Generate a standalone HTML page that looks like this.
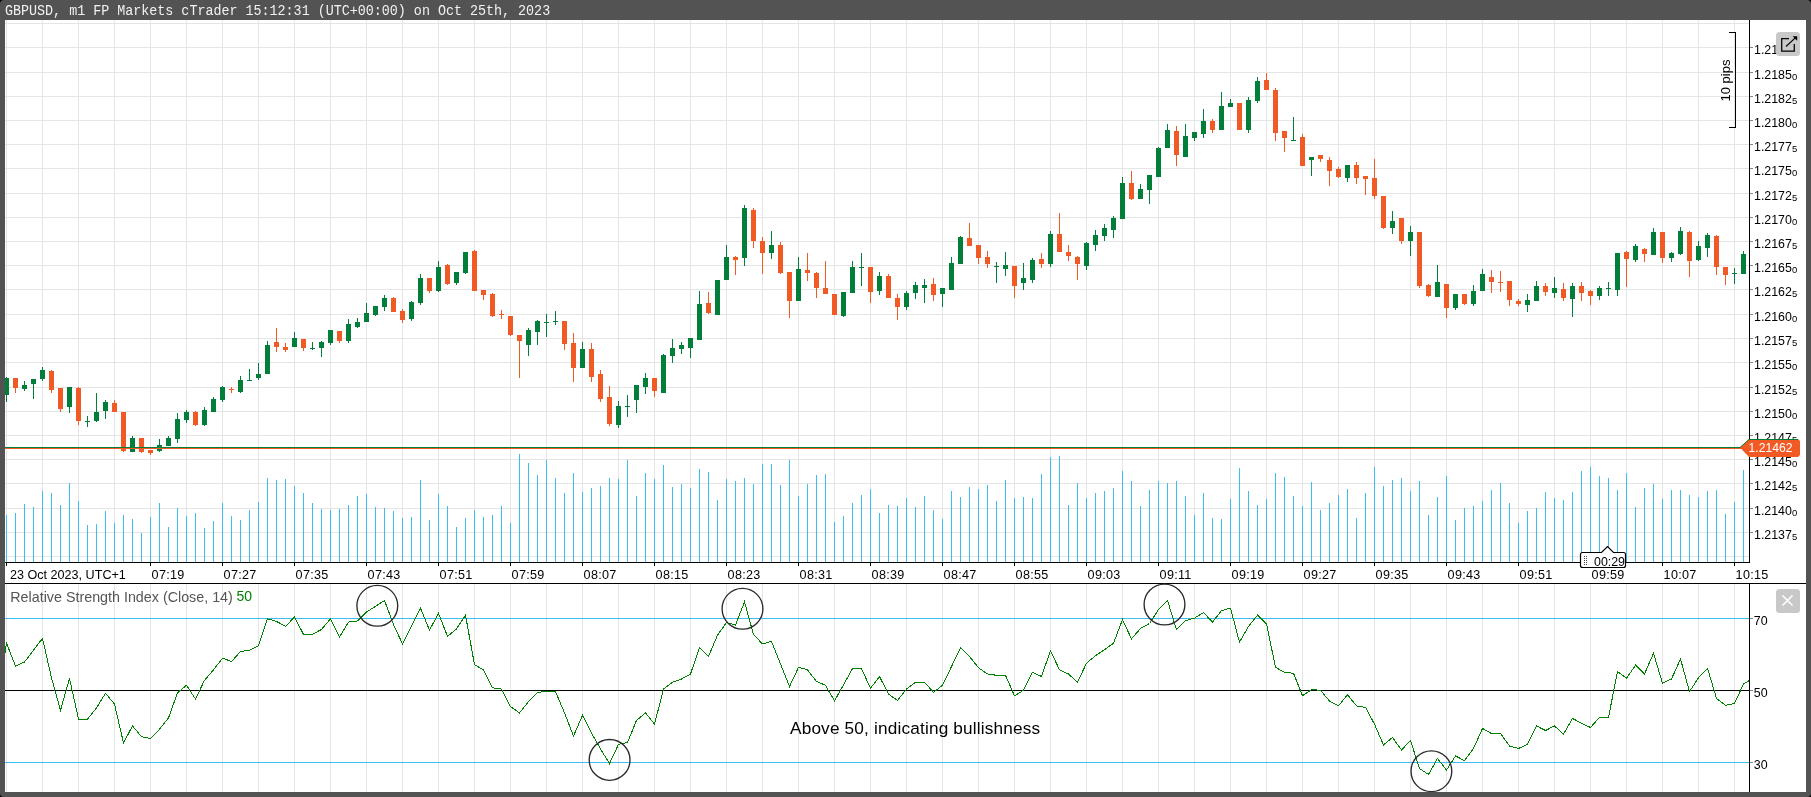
<!DOCTYPE html>
<html><head><meta charset="utf-8"><title>GBPUSD chart</title>
<style>
html,body{margin:0;padding:0;background:#000;width:1811px;height:797px;overflow:hidden}
#frame{position:absolute;left:0;top:0;width:1811px;height:797px;background:#535353;border-radius:4px}
#title{will-change:transform;transform:scaleY(1.11);transform-origin:0 4px;position:absolute;left:4.7px;top:1px;height:19px;line-height:19px;font-family:"Liberation Mono",monospace;font-size:13.37px;color:#f2f2f2;white-space:pre}
</style></head><body>
<div id="frame"></div>
<div id="title">GBPUSD, m1 FP Markets cTrader 15:12:31 (UTC+00:00) on Oct 25th, 2023</div>
<svg width="1811" height="797" viewBox="0 0 1811 797" style="position:absolute;left:0;top:0;will-change:transform">
<defs><clipPath id="plot"><rect x="5" y="20" width="1744" height="542"/></clipPath><clipPath id="rsiclip"><rect x="5" y="584" width="1744" height="208"/></clipPath></defs>
<rect x="5" y="20" width="1801" height="563" fill="#fff"/>
<rect x="5" y="583" width="1801" height="1" fill="#000"/>
<rect x="5" y="584" width="1801" height="208" fill="#fff"/>
<g fill="#e5e5e5" shape-rendering="crispEdges"><rect x="6" y="20" width="1" height="542"/><rect x="6" y="584" width="1" height="208"/><rect x="42" y="20" width="1" height="542"/><rect x="42" y="584" width="1" height="208"/><rect x="78" y="20" width="1" height="542"/><rect x="78" y="584" width="1" height="208"/><rect x="114" y="20" width="1" height="542"/><rect x="114" y="584" width="1" height="208"/><rect x="150" y="20" width="1" height="542"/><rect x="150" y="584" width="1" height="208"/><rect x="186" y="20" width="1" height="542"/><rect x="186" y="584" width="1" height="208"/><rect x="222" y="20" width="1" height="542"/><rect x="222" y="584" width="1" height="208"/><rect x="258" y="20" width="1" height="542"/><rect x="258" y="584" width="1" height="208"/><rect x="294" y="20" width="1" height="542"/><rect x="294" y="584" width="1" height="208"/><rect x="330" y="20" width="1" height="542"/><rect x="330" y="584" width="1" height="208"/><rect x="366" y="20" width="1" height="542"/><rect x="366" y="584" width="1" height="208"/><rect x="402" y="20" width="1" height="542"/><rect x="402" y="584" width="1" height="208"/><rect x="438" y="20" width="1" height="542"/><rect x="438" y="584" width="1" height="208"/><rect x="474" y="20" width="1" height="542"/><rect x="474" y="584" width="1" height="208"/><rect x="510" y="20" width="1" height="542"/><rect x="510" y="584" width="1" height="208"/><rect x="546" y="20" width="1" height="542"/><rect x="546" y="584" width="1" height="208"/><rect x="582" y="20" width="1" height="542"/><rect x="582" y="584" width="1" height="208"/><rect x="618" y="20" width="1" height="542"/><rect x="618" y="584" width="1" height="208"/><rect x="654" y="20" width="1" height="542"/><rect x="654" y="584" width="1" height="208"/><rect x="690" y="20" width="1" height="542"/><rect x="690" y="584" width="1" height="208"/><rect x="726" y="20" width="1" height="542"/><rect x="726" y="584" width="1" height="208"/><rect x="762" y="20" width="1" height="542"/><rect x="762" y="584" width="1" height="208"/><rect x="798" y="20" width="1" height="542"/><rect x="798" y="584" width="1" height="208"/><rect x="834" y="20" width="1" height="542"/><rect x="834" y="584" width="1" height="208"/><rect x="870" y="20" width="1" height="542"/><rect x="870" y="584" width="1" height="208"/><rect x="906" y="20" width="1" height="542"/><rect x="906" y="584" width="1" height="208"/><rect x="942" y="20" width="1" height="542"/><rect x="942" y="584" width="1" height="208"/><rect x="978" y="20" width="1" height="542"/><rect x="978" y="584" width="1" height="208"/><rect x="1014" y="20" width="1" height="542"/><rect x="1014" y="584" width="1" height="208"/><rect x="1050" y="20" width="1" height="542"/><rect x="1050" y="584" width="1" height="208"/><rect x="1086" y="20" width="1" height="542"/><rect x="1086" y="584" width="1" height="208"/><rect x="1122" y="20" width="1" height="542"/><rect x="1122" y="584" width="1" height="208"/><rect x="1158" y="20" width="1" height="542"/><rect x="1158" y="584" width="1" height="208"/><rect x="1194" y="20" width="1" height="542"/><rect x="1194" y="584" width="1" height="208"/><rect x="1230" y="20" width="1" height="542"/><rect x="1230" y="584" width="1" height="208"/><rect x="1266" y="20" width="1" height="542"/><rect x="1266" y="584" width="1" height="208"/><rect x="1302" y="20" width="1" height="542"/><rect x="1302" y="584" width="1" height="208"/><rect x="1338" y="20" width="1" height="542"/><rect x="1338" y="584" width="1" height="208"/><rect x="1374" y="20" width="1" height="542"/><rect x="1374" y="584" width="1" height="208"/><rect x="1410" y="20" width="1" height="542"/><rect x="1410" y="584" width="1" height="208"/><rect x="1446" y="20" width="1" height="542"/><rect x="1446" y="584" width="1" height="208"/><rect x="1482" y="20" width="1" height="542"/><rect x="1482" y="584" width="1" height="208"/><rect x="1518" y="20" width="1" height="542"/><rect x="1518" y="584" width="1" height="208"/><rect x="1554" y="20" width="1" height="542"/><rect x="1554" y="584" width="1" height="208"/><rect x="1590" y="20" width="1" height="542"/><rect x="1590" y="584" width="1" height="208"/><rect x="1626" y="20" width="1" height="542"/><rect x="1626" y="584" width="1" height="208"/><rect x="1662" y="20" width="1" height="542"/><rect x="1662" y="584" width="1" height="208"/><rect x="1698" y="20" width="1" height="542"/><rect x="1698" y="584" width="1" height="208"/><rect x="1734" y="20" width="1" height="542"/><rect x="1734" y="584" width="1" height="208"/><rect x="5" y="23" width="1744" height="1"/><rect x="5" y="47" width="1744" height="1"/><rect x="5" y="72" width="1744" height="1"/><rect x="5" y="96" width="1744" height="1"/><rect x="5" y="120" width="1744" height="1"/><rect x="5" y="144" width="1744" height="1"/><rect x="5" y="168" width="1744" height="1"/><rect x="5" y="193" width="1744" height="1"/><rect x="5" y="217" width="1744" height="1"/><rect x="5" y="241" width="1744" height="1"/><rect x="5" y="265" width="1744" height="1"/><rect x="5" y="289" width="1744" height="1"/><rect x="5" y="314" width="1744" height="1"/><rect x="5" y="338" width="1744" height="1"/><rect x="5" y="362" width="1744" height="1"/><rect x="5" y="387" width="1744" height="1"/><rect x="5" y="411" width="1744" height="1"/><rect x="5" y="435" width="1744" height="1"/><rect x="5" y="459" width="1744" height="1"/><rect x="5" y="483" width="1744" height="1"/><rect x="5" y="508" width="1744" height="1"/><rect x="5" y="532" width="1744" height="1"/><rect x="5" y="556" width="1744" height="1"/></g>
<g fill="#3dbdf0" shape-rendering="crispEdges"><rect x="6" y="515" width="1" height="47"/><rect x="15" y="513" width="1" height="49"/><rect x="24" y="504" width="1" height="58"/><rect x="33" y="507" width="1" height="55"/><rect x="42" y="491" width="1" height="71"/><rect x="51" y="493" width="1" height="69"/><rect x="60" y="505" width="1" height="57"/><rect x="69" y="483" width="1" height="79"/><rect x="78" y="501" width="1" height="61"/><rect x="87" y="525" width="1" height="37"/><rect x="96" y="524" width="1" height="38"/><rect x="105" y="511" width="1" height="51"/><rect x="114" y="523" width="1" height="39"/><rect x="123" y="515" width="1" height="47"/><rect x="132" y="519" width="1" height="43"/><rect x="141" y="533" width="1" height="29"/><rect x="150" y="517" width="1" height="45"/><rect x="159" y="503" width="1" height="59"/><rect x="168" y="527" width="1" height="35"/><rect x="177" y="508" width="1" height="54"/><rect x="186" y="516" width="1" height="46"/><rect x="195" y="513" width="1" height="49"/><rect x="204" y="528" width="1" height="34"/><rect x="213" y="521" width="1" height="41"/><rect x="222" y="503" width="1" height="59"/><rect x="231" y="516" width="1" height="46"/><rect x="240" y="520" width="1" height="42"/><rect x="249" y="510" width="1" height="52"/><rect x="258" y="502" width="1" height="60"/><rect x="267" y="478" width="1" height="84"/><rect x="276" y="480" width="1" height="82"/><rect x="285" y="479" width="1" height="83"/><rect x="294" y="486" width="1" height="76"/><rect x="303" y="493" width="1" height="69"/><rect x="312" y="503" width="1" height="59"/><rect x="321" y="509" width="1" height="53"/><rect x="330" y="510" width="1" height="52"/><rect x="339" y="509" width="1" height="53"/><rect x="348" y="505" width="1" height="57"/><rect x="357" y="496" width="1" height="66"/><rect x="366" y="494" width="1" height="68"/><rect x="375" y="507" width="1" height="55"/><rect x="384" y="508" width="1" height="54"/><rect x="393" y="511" width="1" height="51"/><rect x="402" y="518" width="1" height="44"/><rect x="411" y="517" width="1" height="45"/><rect x="420" y="480" width="1" height="82"/><rect x="429" y="520" width="1" height="42"/><rect x="438" y="494" width="1" height="68"/><rect x="447" y="506" width="1" height="56"/><rect x="456" y="527" width="1" height="35"/><rect x="465" y="518" width="1" height="44"/><rect x="474" y="510" width="1" height="52"/><rect x="483" y="517" width="1" height="45"/><rect x="492" y="515" width="1" height="47"/><rect x="501" y="506" width="1" height="56"/><rect x="510" y="523" width="1" height="39"/><rect x="519" y="454" width="1" height="108"/><rect x="528" y="463" width="1" height="99"/><rect x="537" y="475" width="1" height="87"/><rect x="546" y="460" width="1" height="102"/><rect x="555" y="478" width="1" height="84"/><rect x="564" y="493" width="1" height="69"/><rect x="573" y="473" width="1" height="89"/><rect x="582" y="492" width="1" height="70"/><rect x="591" y="488" width="1" height="74"/><rect x="600" y="486" width="1" height="76"/><rect x="609" y="478" width="1" height="84"/><rect x="618" y="479" width="1" height="83"/><rect x="627" y="460" width="1" height="102"/><rect x="636" y="496" width="1" height="66"/><rect x="645" y="473" width="1" height="89"/><rect x="654" y="479" width="1" height="83"/><rect x="663" y="465" width="1" height="97"/><rect x="672" y="487" width="1" height="75"/><rect x="681" y="484" width="1" height="78"/><rect x="690" y="488" width="1" height="74"/><rect x="699" y="469" width="1" height="93"/><rect x="708" y="472" width="1" height="90"/><rect x="717" y="500" width="1" height="62"/><rect x="726" y="479" width="1" height="83"/><rect x="735" y="481" width="1" height="81"/><rect x="744" y="478" width="1" height="84"/><rect x="753" y="484" width="1" height="78"/><rect x="762" y="464" width="1" height="98"/><rect x="771" y="464" width="1" height="98"/><rect x="780" y="485" width="1" height="77"/><rect x="789" y="460" width="1" height="102"/><rect x="798" y="496" width="1" height="66"/><rect x="807" y="484" width="1" height="78"/><rect x="816" y="475" width="1" height="87"/><rect x="825" y="474" width="1" height="88"/><rect x="834" y="522" width="1" height="40"/><rect x="843" y="516" width="1" height="46"/><rect x="852" y="503" width="1" height="59"/><rect x="861" y="495" width="1" height="67"/><rect x="870" y="489" width="1" height="73"/><rect x="879" y="513" width="1" height="49"/><rect x="888" y="505" width="1" height="57"/><rect x="897" y="506" width="1" height="56"/><rect x="906" y="498" width="1" height="64"/><rect x="915" y="507" width="1" height="55"/><rect x="924" y="496" width="1" height="66"/><rect x="933" y="510" width="1" height="52"/><rect x="942" y="519" width="1" height="43"/><rect x="951" y="491" width="1" height="71"/><rect x="960" y="497" width="1" height="65"/><rect x="969" y="487" width="1" height="75"/><rect x="978" y="489" width="1" height="73"/><rect x="987" y="485" width="1" height="77"/><rect x="996" y="501" width="1" height="61"/><rect x="1005" y="480" width="1" height="82"/><rect x="1014" y="498" width="1" height="64"/><rect x="1023" y="497" width="1" height="65"/><rect x="1032" y="498" width="1" height="64"/><rect x="1041" y="474" width="1" height="88"/><rect x="1050" y="457" width="1" height="105"/><rect x="1059" y="456" width="1" height="106"/><rect x="1068" y="505" width="1" height="57"/><rect x="1077" y="483" width="1" height="79"/><rect x="1086" y="498" width="1" height="64"/><rect x="1095" y="493" width="1" height="69"/><rect x="1104" y="491" width="1" height="71"/><rect x="1113" y="488" width="1" height="74"/><rect x="1122" y="471" width="1" height="91"/><rect x="1131" y="481" width="1" height="81"/><rect x="1140" y="506" width="1" height="56"/><rect x="1149" y="490" width="1" height="72"/><rect x="1158" y="481" width="1" height="81"/><rect x="1167" y="483" width="1" height="79"/><rect x="1176" y="481" width="1" height="81"/><rect x="1185" y="496" width="1" height="66"/><rect x="1194" y="515" width="1" height="47"/><rect x="1203" y="493" width="1" height="69"/><rect x="1212" y="518" width="1" height="44"/><rect x="1221" y="519" width="1" height="43"/><rect x="1230" y="499" width="1" height="63"/><rect x="1239" y="468" width="1" height="94"/><rect x="1248" y="491" width="1" height="71"/><rect x="1257" y="505" width="1" height="57"/><rect x="1266" y="499" width="1" height="63"/><rect x="1275" y="473" width="1" height="89"/><rect x="1284" y="477" width="1" height="85"/><rect x="1293" y="496" width="1" height="66"/><rect x="1302" y="506" width="1" height="56"/><rect x="1311" y="482" width="1" height="80"/><rect x="1320" y="510" width="1" height="52"/><rect x="1329" y="503" width="1" height="59"/><rect x="1338" y="495" width="1" height="67"/><rect x="1347" y="489" width="1" height="73"/><rect x="1356" y="518" width="1" height="44"/><rect x="1365" y="493" width="1" height="69"/><rect x="1374" y="467" width="1" height="95"/><rect x="1383" y="486" width="1" height="76"/><rect x="1392" y="480" width="1" height="82"/><rect x="1401" y="478" width="1" height="84"/><rect x="1410" y="491" width="1" height="71"/><rect x="1419" y="481" width="1" height="81"/><rect x="1428" y="515" width="1" height="47"/><rect x="1437" y="497" width="1" height="65"/><rect x="1446" y="476" width="1" height="86"/><rect x="1455" y="520" width="1" height="42"/><rect x="1464" y="508" width="1" height="54"/><rect x="1473" y="506" width="1" height="56"/><rect x="1482" y="501" width="1" height="61"/><rect x="1491" y="490" width="1" height="72"/><rect x="1500" y="483" width="1" height="79"/><rect x="1509" y="503" width="1" height="59"/><rect x="1518" y="523" width="1" height="39"/><rect x="1527" y="511" width="1" height="51"/><rect x="1536" y="508" width="1" height="54"/><rect x="1545" y="492" width="1" height="70"/><rect x="1554" y="498" width="1" height="64"/><rect x="1563" y="500" width="1" height="62"/><rect x="1572" y="492" width="1" height="70"/><rect x="1581" y="471" width="1" height="91"/><rect x="1590" y="467" width="1" height="95"/><rect x="1599" y="476" width="1" height="86"/><rect x="1608" y="478" width="1" height="84"/><rect x="1617" y="490" width="1" height="72"/><rect x="1626" y="473" width="1" height="89"/><rect x="1635" y="507" width="1" height="55"/><rect x="1644" y="488" width="1" height="74"/><rect x="1653" y="484" width="1" height="78"/><rect x="1662" y="499" width="1" height="63"/><rect x="1671" y="490" width="1" height="72"/><rect x="1680" y="490" width="1" height="72"/><rect x="1689" y="495" width="1" height="67"/><rect x="1698" y="497" width="1" height="65"/><rect x="1707" y="491" width="1" height="71"/><rect x="1716" y="490" width="1" height="72"/><rect x="1725" y="514" width="1" height="48"/><rect x="1734" y="502" width="1" height="60"/><rect x="1743" y="470" width="1" height="92"/></g>
<g clip-path="url(#plot)" shape-rendering="crispEdges"><g fill="#007e3a"><rect x="6" y="377" width="1" height="1"/><rect x="4" y="378" width="5" height="17"/><rect x="6" y="395" width="1" height="7"/></g><g fill="#f15a24"><rect x="13" y="378" width="5" height="10"/><rect x="15" y="388" width="1" height="5"/></g><g fill="#007e3a"><rect x="24" y="381" width="1" height="4"/><rect x="22" y="385" width="5" height="4"/><rect x="24" y="389" width="1" height="2"/></g><g fill="#007e3a"><rect x="31" y="379" width="5" height="5"/><rect x="33" y="384" width="1" height="15"/></g><g fill="#007e3a"><rect x="42" y="367" width="1" height="3"/><rect x="40" y="370" width="5" height="9"/><rect x="42" y="379" width="1" height="2"/></g><g fill="#f15a24"><rect x="51" y="370" width="1" height="1"/><rect x="49" y="371" width="5" height="19"/><rect x="51" y="390" width="1" height="3"/></g><g fill="#f15a24"><rect x="58" y="388" width="5" height="21"/><rect x="60" y="409" width="1" height="3"/></g><g fill="#007e3a"><rect x="67" y="387" width="5" height="20"/><rect x="69" y="407" width="1" height="6"/></g><g fill="#f15a24"><rect x="78" y="387" width="1" height="1"/><rect x="76" y="388" width="5" height="33"/><rect x="78" y="421" width="1" height="4"/></g><g fill="#007e3a"><rect x="87" y="416" width="1" height="5"/><rect x="85" y="421" width="5" height="1"/><rect x="87" y="422" width="1" height="5"/></g><g fill="#007e3a"><rect x="96" y="393" width="1" height="19"/><rect x="94" y="412" width="5" height="9"/><rect x="96" y="421" width="1" height="1"/></g><g fill="#007e3a"><rect x="105" y="400" width="1" height="2"/><rect x="103" y="402" width="5" height="9"/><rect x="105" y="411" width="1" height="8"/></g><g fill="#f15a24"><rect x="114" y="400" width="1" height="3"/><rect x="112" y="403" width="5" height="9"/></g><g fill="#f15a24"><rect x="121" y="412" width="5" height="39"/><rect x="123" y="451" width="1" height="1"/></g><g fill="#007e3a"><rect x="132" y="436" width="1" height="2"/><rect x="130" y="438" width="5" height="14"/></g><g fill="#f15a24"><rect x="139" y="438" width="5" height="14"/><rect x="141" y="452" width="1" height="1"/></g><g fill="#f15a24"><rect x="148" y="450" width="5" height="3"/><rect x="150" y="453" width="1" height="2"/></g><g fill="#007e3a"><rect x="159" y="439" width="1" height="6"/><rect x="157" y="445" width="5" height="6"/><rect x="159" y="451" width="1" height="1"/></g><g fill="#007e3a"><rect x="168" y="436" width="1" height="2"/><rect x="166" y="438" width="5" height="8"/></g><g fill="#007e3a"><rect x="177" y="413" width="1" height="6"/><rect x="175" y="419" width="5" height="20"/><rect x="177" y="439" width="1" height="4"/></g><g fill="#007e3a"><rect x="186" y="410" width="1" height="2"/><rect x="184" y="412" width="5" height="8"/><rect x="186" y="420" width="1" height="3"/></g><g fill="#f15a24"><rect x="195" y="411" width="1" height="1"/><rect x="193" y="412" width="5" height="13"/><rect x="195" y="425" width="1" height="1"/></g><g fill="#007e3a"><rect x="204" y="407" width="1" height="3"/><rect x="202" y="410" width="5" height="15"/><rect x="204" y="425" width="1" height="1"/></g><g fill="#007e3a"><rect x="213" y="397" width="1" height="2"/><rect x="211" y="399" width="5" height="13"/></g><g fill="#007e3a"><rect x="222" y="386" width="1" height="1"/><rect x="220" y="387" width="5" height="13"/><rect x="222" y="400" width="1" height="2"/></g><g fill="#f15a24"><rect x="231" y="387" width="1" height="2"/><rect x="229" y="389" width="5" height="1"/><rect x="231" y="390" width="1" height="3"/></g><g fill="#007e3a"><rect x="240" y="376" width="1" height="4"/><rect x="238" y="380" width="5" height="12"/><rect x="240" y="392" width="1" height="1"/></g><g fill="#007e3a"><rect x="249" y="369" width="1" height="11"/><rect x="247" y="380" width="5" height="1"/></g><g fill="#007e3a"><rect x="258" y="363" width="1" height="11"/><rect x="256" y="374" width="5" height="4"/><rect x="258" y="378" width="1" height="2"/></g><g fill="#007e3a"><rect x="267" y="341" width="1" height="4"/><rect x="265" y="345" width="5" height="29"/></g><g fill="#f15a24"><rect x="276" y="328" width="1" height="14"/><rect x="274" y="342" width="5" height="5"/><rect x="276" y="347" width="1" height="5"/></g><g fill="#f15a24"><rect x="285" y="343" width="1" height="4"/><rect x="283" y="347" width="5" height="3"/><rect x="285" y="350" width="1" height="2"/></g><g fill="#007e3a"><rect x="294" y="332" width="1" height="6"/><rect x="292" y="338" width="5" height="9"/></g><g fill="#f15a24"><rect x="301" y="339" width="5" height="9"/><rect x="303" y="348" width="1" height="3"/></g><g fill="#007e3a"><rect x="312" y="342" width="1" height="6"/><rect x="310" y="348" width="5" height="1"/><rect x="312" y="349" width="1" height="1"/></g><g fill="#007e3a"><rect x="321" y="341" width="1" height="1"/><rect x="319" y="342" width="5" height="6"/><rect x="321" y="348" width="1" height="9"/></g><g fill="#007e3a"><rect x="328" y="330" width="5" height="13"/><rect x="330" y="343" width="1" height="2"/></g><g fill="#f15a24"><rect x="337" y="331" width="5" height="10"/><rect x="339" y="341" width="1" height="2"/></g><g fill="#007e3a"><rect x="348" y="319" width="1" height="5"/><rect x="346" y="324" width="5" height="17"/><rect x="348" y="341" width="1" height="2"/></g><g fill="#007e3a"><rect x="357" y="318" width="1" height="4"/><rect x="355" y="322" width="5" height="5"/><rect x="357" y="327" width="1" height="1"/></g><g fill="#007e3a"><rect x="366" y="303" width="1" height="10"/><rect x="364" y="313" width="5" height="9"/></g><g fill="#007e3a"><rect x="373" y="306" width="5" height="9"/><rect x="375" y="315" width="1" height="1"/></g><g fill="#007e3a"><rect x="384" y="295" width="1" height="3"/><rect x="382" y="298" width="5" height="9"/><rect x="384" y="307" width="1" height="4"/></g><g fill="#f15a24"><rect x="393" y="297" width="1" height="1"/><rect x="391" y="298" width="5" height="14"/></g><g fill="#f15a24"><rect x="402" y="309" width="1" height="2"/><rect x="400" y="311" width="5" height="9"/><rect x="402" y="320" width="1" height="3"/></g><g fill="#007e3a"><rect x="411" y="301" width="1" height="1"/><rect x="409" y="302" width="5" height="17"/><rect x="411" y="319" width="1" height="2"/></g><g fill="#007e3a"><rect x="420" y="274" width="1" height="4"/><rect x="418" y="278" width="5" height="25"/><rect x="420" y="303" width="1" height="2"/></g><g fill="#f15a24"><rect x="427" y="278" width="5" height="13"/><rect x="429" y="291" width="1" height="2"/></g><g fill="#007e3a"><rect x="438" y="261" width="1" height="6"/><rect x="436" y="267" width="5" height="24"/><rect x="438" y="291" width="1" height="1"/></g><g fill="#f15a24"><rect x="447" y="264" width="1" height="1"/><rect x="445" y="265" width="5" height="19"/><rect x="447" y="284" width="1" height="1"/></g><g fill="#007e3a"><rect x="454" y="272" width="5" height="11"/><rect x="456" y="283" width="1" height="2"/></g><g fill="#007e3a"><rect x="463" y="252" width="5" height="21"/><rect x="465" y="273" width="1" height="1"/></g><g fill="#f15a24"><rect x="474" y="250" width="1" height="1"/><rect x="472" y="251" width="5" height="40"/></g><g fill="#f15a24"><rect x="481" y="290" width="5" height="5"/><rect x="483" y="295" width="1" height="5"/></g><g fill="#f15a24"><rect x="492" y="293" width="1" height="1"/><rect x="490" y="294" width="5" height="22"/><rect x="492" y="316" width="1" height="1"/></g><g fill="#f15a24"><rect x="501" y="310" width="1" height="4"/><rect x="499" y="314" width="5" height="1"/><rect x="501" y="315" width="1" height="4"/></g><g fill="#f15a24"><rect x="508" y="316" width="5" height="19"/><rect x="510" y="335" width="1" height="1"/></g><g fill="#f15a24"><rect x="517" y="335" width="5" height="6"/><rect x="519" y="341" width="1" height="37"/></g><g fill="#007e3a"><rect x="528" y="328" width="1" height="2"/><rect x="526" y="330" width="5" height="15"/><rect x="528" y="345" width="1" height="11"/></g><g fill="#007e3a"><rect x="537" y="320" width="1" height="1"/><rect x="535" y="321" width="5" height="11"/><rect x="537" y="332" width="1" height="13"/></g><g fill="#007e3a"><rect x="546" y="314" width="1" height="8"/><rect x="544" y="322" width="5" height="1"/><rect x="546" y="323" width="1" height="14"/></g><g fill="#007e3a"><rect x="555" y="311" width="1" height="10"/><rect x="553" y="321" width="5" height="1"/><rect x="555" y="322" width="1" height="3"/></g><g fill="#f15a24"><rect x="562" y="321" width="5" height="23"/><rect x="564" y="344" width="1" height="6"/></g><g fill="#f15a24"><rect x="573" y="333" width="1" height="10"/><rect x="571" y="343" width="5" height="25"/><rect x="573" y="368" width="1" height="14"/></g><g fill="#007e3a"><rect x="582" y="342" width="1" height="7"/><rect x="580" y="349" width="5" height="19"/></g><g fill="#f15a24"><rect x="591" y="343" width="1" height="6"/><rect x="589" y="349" width="5" height="28"/><rect x="591" y="377" width="1" height="5"/></g><g fill="#f15a24"><rect x="600" y="370" width="1" height="4"/><rect x="598" y="374" width="5" height="25"/><rect x="600" y="399" width="1" height="3"/></g><g fill="#f15a24"><rect x="609" y="386" width="1" height="11"/><rect x="607" y="397" width="5" height="27"/><rect x="609" y="424" width="1" height="2"/></g><g fill="#007e3a"><rect x="618" y="401" width="1" height="5"/><rect x="616" y="406" width="5" height="19"/><rect x="618" y="425" width="1" height="3"/></g><g fill="#007e3a"><rect x="627" y="395" width="1" height="11"/><rect x="625" y="406" width="5" height="1"/><rect x="627" y="407" width="1" height="10"/></g><g fill="#007e3a"><rect x="634" y="385" width="5" height="15"/><rect x="636" y="400" width="1" height="13"/></g><g fill="#007e3a"><rect x="645" y="373" width="1" height="5"/><rect x="643" y="378" width="5" height="9"/><rect x="645" y="387" width="1" height="7"/></g><g fill="#f15a24"><rect x="652" y="378" width="5" height="13"/><rect x="654" y="391" width="1" height="6"/></g><g fill="#007e3a"><rect x="663" y="354" width="1" height="1"/><rect x="661" y="355" width="5" height="38"/></g><g fill="#007e3a"><rect x="672" y="339" width="1" height="9"/><rect x="670" y="348" width="5" height="8"/><rect x="672" y="356" width="1" height="7"/></g><g fill="#007e3a"><rect x="681" y="342" width="1" height="3"/><rect x="679" y="345" width="5" height="4"/><rect x="681" y="349" width="1" height="5"/></g><g fill="#007e3a"><rect x="688" y="338" width="5" height="10"/><rect x="690" y="348" width="1" height="10"/></g><g fill="#007e3a"><rect x="699" y="291" width="1" height="13"/><rect x="697" y="304" width="5" height="36"/></g><g fill="#f15a24"><rect x="708" y="292" width="1" height="11"/><rect x="706" y="303" width="5" height="10"/><rect x="708" y="313" width="1" height="1"/></g><g fill="#007e3a"><rect x="715" y="280" width="5" height="35"/></g><g fill="#007e3a"><rect x="726" y="245" width="1" height="12"/><rect x="724" y="257" width="5" height="23"/></g><g fill="#f15a24"><rect x="735" y="256" width="1" height="1"/><rect x="733" y="257" width="5" height="3"/><rect x="735" y="260" width="1" height="15"/></g><g fill="#007e3a"><rect x="744" y="205" width="1" height="3"/><rect x="742" y="208" width="5" height="50"/><rect x="744" y="258" width="1" height="8"/></g><g fill="#f15a24"><rect x="753" y="208" width="1" height="2"/><rect x="751" y="210" width="5" height="31"/><rect x="753" y="241" width="1" height="7"/></g><g fill="#f15a24"><rect x="762" y="237" width="1" height="4"/><rect x="760" y="241" width="5" height="12"/><rect x="762" y="253" width="1" height="21"/></g><g fill="#007e3a"><rect x="771" y="231" width="1" height="14"/><rect x="769" y="245" width="5" height="8"/><rect x="771" y="253" width="1" height="6"/></g><g fill="#f15a24"><rect x="780" y="242" width="1" height="3"/><rect x="778" y="245" width="5" height="28"/><rect x="780" y="273" width="1" height="1"/></g><g fill="#f15a24"><rect x="787" y="272" width="5" height="29"/><rect x="789" y="301" width="1" height="17"/></g><g fill="#007e3a"><rect x="798" y="257" width="1" height="12"/><rect x="796" y="269" width="5" height="32"/></g><g fill="#f15a24"><rect x="807" y="253" width="1" height="17"/><rect x="805" y="270" width="5" height="3"/><rect x="807" y="273" width="1" height="8"/></g><g fill="#f15a24"><rect x="816" y="272" width="1" height="1"/><rect x="814" y="273" width="5" height="15"/><rect x="816" y="288" width="1" height="10"/></g><g fill="#f15a24"><rect x="825" y="261" width="1" height="27"/><rect x="823" y="288" width="5" height="6"/></g><g fill="#f15a24"><rect x="832" y="294" width="5" height="21"/></g><g fill="#007e3a"><rect x="841" y="292" width="5" height="24"/><rect x="843" y="316" width="1" height="1"/></g><g fill="#007e3a"><rect x="852" y="261" width="1" height="6"/><rect x="850" y="267" width="5" height="26"/></g><g fill="#007e3a"><rect x="861" y="253" width="1" height="14"/><rect x="859" y="267" width="5" height="1"/><rect x="861" y="268" width="1" height="18"/></g><g fill="#f15a24"><rect x="868" y="267" width="5" height="25"/><rect x="870" y="292" width="1" height="11"/></g><g fill="#007e3a"><rect x="879" y="272" width="1" height="4"/><rect x="877" y="276" width="5" height="15"/><rect x="879" y="291" width="1" height="4"/></g><g fill="#f15a24"><rect x="888" y="274" width="1" height="2"/><rect x="886" y="276" width="5" height="22"/></g><g fill="#f15a24"><rect x="897" y="294" width="1" height="4"/><rect x="895" y="298" width="5" height="9"/><rect x="897" y="307" width="1" height="13"/></g><g fill="#007e3a"><rect x="906" y="291" width="1" height="2"/><rect x="904" y="293" width="5" height="14"/><rect x="906" y="307" width="1" height="3"/></g><g fill="#007e3a"><rect x="915" y="282" width="1" height="3"/><rect x="913" y="285" width="5" height="8"/><rect x="915" y="293" width="1" height="6"/></g><g fill="#007e3a"><rect x="924" y="279" width="1" height="6"/><rect x="922" y="285" width="5" height="3"/><rect x="924" y="288" width="1" height="15"/></g><g fill="#f15a24"><rect x="933" y="278" width="1" height="6"/><rect x="931" y="284" width="5" height="11"/><rect x="933" y="295" width="1" height="6"/></g><g fill="#007e3a"><rect x="940" y="288" width="5" height="6"/><rect x="942" y="294" width="1" height="13"/></g><g fill="#007e3a"><rect x="951" y="257" width="1" height="6"/><rect x="949" y="263" width="5" height="27"/></g><g fill="#007e3a"><rect x="960" y="236" width="1" height="1"/><rect x="958" y="237" width="5" height="27"/></g><g fill="#f15a24"><rect x="969" y="223" width="1" height="15"/><rect x="967" y="238" width="5" height="8"/></g><g fill="#f15a24"><rect x="976" y="245" width="5" height="13"/><rect x="978" y="258" width="1" height="6"/></g><g fill="#f15a24"><rect x="987" y="251" width="1" height="6"/><rect x="985" y="257" width="5" height="7"/><rect x="987" y="264" width="1" height="4"/></g><g fill="#007e3a"><rect x="996" y="262" width="1" height="4"/><rect x="994" y="266" width="5" height="1"/><rect x="996" y="267" width="1" height="16"/></g><g fill="#007e3a"><rect x="1005" y="252" width="1" height="13"/><rect x="1003" y="265" width="5" height="4"/><rect x="1005" y="269" width="1" height="7"/></g><g fill="#f15a24"><rect x="1012" y="266" width="5" height="20"/><rect x="1014" y="286" width="1" height="12"/></g><g fill="#007e3a"><rect x="1023" y="263" width="1" height="15"/><rect x="1021" y="278" width="5" height="5"/><rect x="1023" y="283" width="1" height="7"/></g><g fill="#007e3a"><rect x="1032" y="258" width="1" height="2"/><rect x="1030" y="260" width="5" height="20"/><rect x="1032" y="280" width="1" height="3"/></g><g fill="#f15a24"><rect x="1041" y="253" width="1" height="6"/><rect x="1039" y="259" width="5" height="5"/><rect x="1041" y="264" width="1" height="4"/></g><g fill="#007e3a"><rect x="1050" y="231" width="1" height="3"/><rect x="1048" y="234" width="5" height="30"/><rect x="1050" y="264" width="1" height="3"/></g><g fill="#f15a24"><rect x="1059" y="213" width="1" height="21"/><rect x="1057" y="234" width="5" height="18"/></g><g fill="#f15a24"><rect x="1068" y="245" width="1" height="7"/><rect x="1066" y="252" width="5" height="4"/><rect x="1068" y="256" width="1" height="5"/></g><g fill="#f15a24"><rect x="1077" y="256" width="1" height="1"/><rect x="1075" y="257" width="5" height="7"/><rect x="1077" y="264" width="1" height="16"/></g><g fill="#007e3a"><rect x="1086" y="242" width="1" height="1"/><rect x="1084" y="243" width="5" height="23"/><rect x="1086" y="266" width="1" height="4"/></g><g fill="#007e3a"><rect x="1095" y="230" width="1" height="5"/><rect x="1093" y="235" width="5" height="10"/><rect x="1095" y="245" width="1" height="6"/></g><g fill="#007e3a"><rect x="1104" y="224" width="1" height="4"/><rect x="1102" y="228" width="5" height="8"/><rect x="1104" y="236" width="1" height="5"/></g><g fill="#007e3a"><rect x="1113" y="216" width="1" height="2"/><rect x="1111" y="218" width="5" height="12"/><rect x="1113" y="230" width="1" height="8"/></g><g fill="#007e3a"><rect x="1122" y="177" width="1" height="6"/><rect x="1120" y="183" width="5" height="36"/></g><g fill="#f15a24"><rect x="1131" y="171" width="1" height="12"/><rect x="1129" y="183" width="5" height="16"/><rect x="1131" y="199" width="1" height="1"/></g><g fill="#007e3a"><rect x="1140" y="184" width="1" height="5"/><rect x="1138" y="189" width="5" height="10"/></g><g fill="#007e3a"><rect x="1147" y="175" width="5" height="15"/><rect x="1149" y="190" width="1" height="14"/></g><g fill="#007e3a"><rect x="1158" y="147" width="1" height="1"/><rect x="1156" y="148" width="5" height="29"/></g><g fill="#007e3a"><rect x="1167" y="124" width="1" height="6"/><rect x="1165" y="130" width="5" height="18"/></g><g fill="#f15a24"><rect x="1176" y="126" width="1" height="5"/><rect x="1174" y="131" width="5" height="24"/><rect x="1176" y="155" width="1" height="11"/></g><g fill="#007e3a"><rect x="1185" y="124" width="1" height="12"/><rect x="1183" y="136" width="5" height="21"/></g><g fill="#007e3a"><rect x="1192" y="132" width="5" height="6"/><rect x="1194" y="138" width="1" height="3"/></g><g fill="#007e3a"><rect x="1203" y="109" width="1" height="12"/><rect x="1201" y="121" width="5" height="13"/><rect x="1203" y="134" width="1" height="4"/></g><g fill="#f15a24"><rect x="1212" y="119" width="1" height="2"/><rect x="1210" y="121" width="5" height="9"/><rect x="1212" y="130" width="1" height="3"/></g><g fill="#007e3a"><rect x="1221" y="92" width="1" height="14"/><rect x="1219" y="106" width="5" height="24"/></g><g fill="#007e3a"><rect x="1230" y="99" width="1" height="4"/><rect x="1228" y="103" width="5" height="4"/></g><g fill="#f15a24"><rect x="1237" y="103" width="5" height="27"/></g><g fill="#007e3a"><rect x="1248" y="97" width="1" height="3"/><rect x="1246" y="100" width="5" height="30"/><rect x="1248" y="130" width="1" height="3"/></g><g fill="#007e3a"><rect x="1257" y="77" width="1" height="4"/><rect x="1255" y="81" width="5" height="20"/><rect x="1257" y="101" width="1" height="2"/></g><g fill="#f15a24"><rect x="1266" y="73" width="1" height="7"/><rect x="1264" y="80" width="5" height="10"/></g><g fill="#f15a24"><rect x="1275" y="88" width="1" height="2"/><rect x="1273" y="90" width="5" height="43"/><rect x="1275" y="133" width="1" height="8"/></g><g fill="#f15a24"><rect x="1282" y="131" width="5" height="7"/><rect x="1284" y="138" width="1" height="14"/></g><g fill="#007e3a"><rect x="1293" y="117" width="1" height="23"/><rect x="1291" y="140" width="5" height="1"/></g><g fill="#f15a24"><rect x="1302" y="134" width="1" height="3"/><rect x="1300" y="137" width="5" height="29"/></g><g fill="#007e3a"><rect x="1309" y="157" width="5" height="3"/><rect x="1311" y="160" width="1" height="16"/></g><g fill="#f15a24"><rect x="1318" y="155" width="5" height="4"/><rect x="1320" y="159" width="1" height="3"/></g><g fill="#f15a24"><rect x="1329" y="157" width="1" height="3"/><rect x="1327" y="160" width="5" height="11"/><rect x="1329" y="171" width="1" height="15"/></g><g fill="#f15a24"><rect x="1338" y="167" width="1" height="2"/><rect x="1336" y="169" width="5" height="8"/><rect x="1338" y="177" width="1" height="1"/></g><g fill="#007e3a"><rect x="1345" y="165" width="5" height="13"/><rect x="1347" y="178" width="1" height="4"/></g><g fill="#f15a24"><rect x="1356" y="162" width="1" height="3"/><rect x="1354" y="165" width="5" height="13"/><rect x="1356" y="178" width="1" height="6"/></g><g fill="#f15a24"><rect x="1363" y="176" width="5" height="3"/><rect x="1365" y="179" width="1" height="16"/></g><g fill="#f15a24"><rect x="1374" y="159" width="1" height="19"/><rect x="1372" y="178" width="5" height="18"/><rect x="1374" y="196" width="1" height="3"/></g><g fill="#f15a24"><rect x="1381" y="196" width="5" height="32"/><rect x="1383" y="228" width="1" height="1"/></g><g fill="#007e3a"><rect x="1392" y="211" width="1" height="10"/><rect x="1390" y="221" width="5" height="7"/><rect x="1392" y="228" width="1" height="6"/></g><g fill="#f15a24"><rect x="1399" y="218" width="5" height="23"/><rect x="1401" y="241" width="1" height="3"/></g><g fill="#007e3a"><rect x="1410" y="226" width="1" height="6"/><rect x="1408" y="232" width="5" height="9"/><rect x="1410" y="241" width="1" height="15"/></g><g fill="#f15a24"><rect x="1417" y="232" width="5" height="54"/><rect x="1419" y="286" width="1" height="2"/></g><g fill="#f15a24"><rect x="1428" y="284" width="1" height="1"/><rect x="1426" y="285" width="5" height="11"/><rect x="1428" y="296" width="1" height="1"/></g><g fill="#007e3a"><rect x="1437" y="265" width="1" height="17"/><rect x="1435" y="282" width="5" height="15"/></g><g fill="#f15a24"><rect x="1444" y="284" width="5" height="24"/><rect x="1446" y="308" width="1" height="10"/></g><g fill="#007e3a"><rect x="1453" y="294" width="5" height="14"/><rect x="1455" y="308" width="1" height="2"/></g><g fill="#f15a24"><rect x="1462" y="294" width="5" height="10"/><rect x="1464" y="304" width="1" height="1"/></g><g fill="#007e3a"><rect x="1473" y="285" width="1" height="6"/><rect x="1471" y="291" width="5" height="13"/><rect x="1473" y="304" width="1" height="2"/></g><g fill="#007e3a"><rect x="1482" y="269" width="1" height="5"/><rect x="1480" y="274" width="5" height="17"/></g><g fill="#f15a24"><rect x="1491" y="270" width="1" height="7"/><rect x="1489" y="277" width="5" height="5"/><rect x="1491" y="282" width="1" height="11"/></g><g fill="#f15a24"><rect x="1500" y="271" width="1" height="11"/><rect x="1498" y="282" width="5" height="1"/><rect x="1500" y="283" width="1" height="9"/></g><g fill="#f15a24"><rect x="1507" y="281" width="5" height="19"/><rect x="1509" y="300" width="1" height="6"/></g><g fill="#f15a24"><rect x="1518" y="299" width="1" height="2"/><rect x="1516" y="301" width="5" height="3"/><rect x="1518" y="304" width="1" height="2"/></g><g fill="#007e3a"><rect x="1527" y="294" width="1" height="6"/><rect x="1525" y="300" width="5" height="5"/><rect x="1527" y="305" width="1" height="7"/></g><g fill="#007e3a"><rect x="1536" y="281" width="1" height="5"/><rect x="1534" y="286" width="5" height="15"/></g><g fill="#f15a24"><rect x="1545" y="283" width="1" height="3"/><rect x="1543" y="286" width="5" height="6"/><rect x="1545" y="292" width="1" height="4"/></g><g fill="#007e3a"><rect x="1554" y="277" width="1" height="11"/><rect x="1552" y="288" width="5" height="5"/><rect x="1554" y="293" width="1" height="5"/></g><g fill="#f15a24"><rect x="1563" y="283" width="1" height="6"/><rect x="1561" y="289" width="5" height="9"/><rect x="1563" y="298" width="1" height="3"/></g><g fill="#007e3a"><rect x="1572" y="283" width="1" height="3"/><rect x="1570" y="286" width="5" height="13"/><rect x="1572" y="299" width="1" height="18"/></g><g fill="#f15a24"><rect x="1581" y="282" width="1" height="4"/><rect x="1579" y="286" width="5" height="7"/><rect x="1581" y="293" width="1" height="8"/></g><g fill="#f15a24"><rect x="1590" y="290" width="1" height="1"/><rect x="1588" y="291" width="5" height="5"/><rect x="1590" y="296" width="1" height="9"/></g><g fill="#007e3a"><rect x="1599" y="286" width="1" height="2"/><rect x="1597" y="288" width="5" height="8"/><rect x="1599" y="296" width="1" height="4"/></g><g fill="#007e3a"><rect x="1608" y="282" width="1" height="6"/><rect x="1606" y="288" width="5" height="1"/><rect x="1608" y="289" width="1" height="7"/></g><g fill="#007e3a"><rect x="1615" y="253" width="5" height="37"/><rect x="1617" y="290" width="1" height="6"/></g><g fill="#f15a24"><rect x="1626" y="251" width="1" height="1"/><rect x="1624" y="252" width="5" height="7"/><rect x="1626" y="259" width="1" height="28"/></g><g fill="#007e3a"><rect x="1635" y="244" width="1" height="2"/><rect x="1633" y="246" width="5" height="14"/><rect x="1635" y="260" width="1" height="2"/></g><g fill="#f15a24"><rect x="1644" y="248" width="1" height="1"/><rect x="1642" y="249" width="5" height="5"/><rect x="1644" y="254" width="1" height="8"/></g><g fill="#007e3a"><rect x="1653" y="228" width="1" height="4"/><rect x="1651" y="232" width="5" height="23"/></g><g fill="#f15a24"><rect x="1660" y="232" width="5" height="26"/><rect x="1662" y="258" width="1" height="5"/></g><g fill="#007e3a"><rect x="1671" y="252" width="1" height="1"/><rect x="1669" y="253" width="5" height="5"/><rect x="1671" y="258" width="1" height="4"/></g><g fill="#007e3a"><rect x="1680" y="227" width="1" height="4"/><rect x="1678" y="231" width="5" height="23"/><rect x="1680" y="254" width="1" height="1"/></g><g fill="#f15a24"><rect x="1689" y="231" width="1" height="1"/><rect x="1687" y="232" width="5" height="29"/><rect x="1689" y="261" width="1" height="16"/></g><g fill="#007e3a"><rect x="1698" y="241" width="1" height="5"/><rect x="1696" y="246" width="5" height="14"/><rect x="1698" y="260" width="1" height="1"/></g><g fill="#007e3a"><rect x="1707" y="233" width="1" height="2"/><rect x="1705" y="235" width="5" height="13"/><rect x="1707" y="248" width="1" height="9"/></g><g fill="#f15a24"><rect x="1716" y="235" width="1" height="1"/><rect x="1714" y="236" width="5" height="31"/><rect x="1716" y="267" width="1" height="8"/></g><g fill="#f15a24"><rect x="1723" y="267" width="5" height="8"/><rect x="1725" y="275" width="1" height="10"/></g><g fill="#007e3a"><rect x="1734" y="268" width="1" height="5"/><rect x="1732" y="273" width="5" height="1"/><rect x="1734" y="274" width="1" height="10"/></g><g fill="#007e3a"><rect x="1743" y="251" width="1" height="3"/><rect x="1741" y="254" width="5" height="20"/></g></g>
<rect x="5" y="447" width="1744" height="1" fill="#007e3a"/>
<rect x="5" y="448" width="1744" height="1" fill="#f15a24"/>
<rect x="1749" y="20" width="1" height="542" fill="#000"/>
<rect x="5" y="562" width="1745" height="1" fill="#000"/>
<rect x="1749" y="584" width="1" height="208" fill="#000"/>
<g font-family="Liberation Sans, sans-serif" fill="#000"><rect x="1750" y="47" width="3" height="1" fill="#888"/><text x="1754" y="54.2" font-size="12.4">1.2187<tspan font-size="9.5" dy="1">5</tspan></text><rect x="1750" y="72" width="3" height="1" fill="#888"/><text x="1754" y="79.2" font-size="12.4">1.2185<tspan font-size="9.5" dy="1">0</tspan></text><rect x="1750" y="96" width="3" height="1" fill="#888"/><text x="1754" y="103.2" font-size="12.4">1.2182<tspan font-size="9.5" dy="1">5</tspan></text><rect x="1750" y="120" width="3" height="1" fill="#888"/><text x="1754" y="127.2" font-size="12.4">1.2180<tspan font-size="9.5" dy="1">0</tspan></text><rect x="1750" y="144" width="3" height="1" fill="#888"/><text x="1754" y="151.2" font-size="12.4">1.2177<tspan font-size="9.5" dy="1">5</tspan></text><rect x="1750" y="168" width="3" height="1" fill="#888"/><text x="1754" y="175.2" font-size="12.4">1.2175<tspan font-size="9.5" dy="1">0</tspan></text><rect x="1750" y="193" width="3" height="1" fill="#888"/><text x="1754" y="200.2" font-size="12.4">1.2172<tspan font-size="9.5" dy="1">5</tspan></text><rect x="1750" y="217" width="3" height="1" fill="#888"/><text x="1754" y="224.2" font-size="12.4">1.2170<tspan font-size="9.5" dy="1">0</tspan></text><rect x="1750" y="241" width="3" height="1" fill="#888"/><text x="1754" y="248.2" font-size="12.4">1.2167<tspan font-size="9.5" dy="1">5</tspan></text><rect x="1750" y="265" width="3" height="1" fill="#888"/><text x="1754" y="272.2" font-size="12.4">1.2165<tspan font-size="9.5" dy="1">0</tspan></text><rect x="1750" y="289" width="3" height="1" fill="#888"/><text x="1754" y="296.2" font-size="12.4">1.2162<tspan font-size="9.5" dy="1">5</tspan></text><rect x="1750" y="314" width="3" height="1" fill="#888"/><text x="1754" y="321.2" font-size="12.4">1.2160<tspan font-size="9.5" dy="1">0</tspan></text><rect x="1750" y="338" width="3" height="1" fill="#888"/><text x="1754" y="345.2" font-size="12.4">1.2157<tspan font-size="9.5" dy="1">5</tspan></text><rect x="1750" y="362" width="3" height="1" fill="#888"/><text x="1754" y="369.2" font-size="12.4">1.2155<tspan font-size="9.5" dy="1">0</tspan></text><rect x="1750" y="387" width="3" height="1" fill="#888"/><text x="1754" y="394.2" font-size="12.4">1.2152<tspan font-size="9.5" dy="1">5</tspan></text><rect x="1750" y="411" width="3" height="1" fill="#888"/><text x="1754" y="418.2" font-size="12.4">1.2150<tspan font-size="9.5" dy="1">0</tspan></text><rect x="1750" y="435" width="3" height="1" fill="#888"/><text x="1754" y="442.2" font-size="12.4">1.2147<tspan font-size="9.5" dy="1">5</tspan></text><rect x="1750" y="459" width="3" height="1" fill="#888"/><text x="1754" y="466.2" font-size="12.4">1.2145<tspan font-size="9.5" dy="1">0</tspan></text><rect x="1750" y="483" width="3" height="1" fill="#888"/><text x="1754" y="490.2" font-size="12.4">1.2142<tspan font-size="9.5" dy="1">5</tspan></text><rect x="1750" y="508" width="3" height="1" fill="#888"/><text x="1754" y="515.2" font-size="12.4">1.2140<tspan font-size="9.5" dy="1">0</tspan></text><rect x="1750" y="532" width="3" height="1" fill="#888"/><text x="1754" y="539.2" font-size="12.4">1.2137<tspan font-size="9.5" dy="1">5</tspan></text></g>
<g font-family="Liberation Sans, sans-serif" fill="#000"><rect x="6" y="563" width="1" height="3" fill="#000"/><text x="10" y="579" font-size="12.6">23 Oct 2023, UTC+1</text><rect x="150" y="563" width="1" height="3" fill="#000"/><text x="151.6" y="579" font-size="12.6" letter-spacing="0.3">07:19</text><rect x="222" y="563" width="1" height="3" fill="#000"/><text x="223.6" y="579" font-size="12.6" letter-spacing="0.3">07:27</text><rect x="294" y="563" width="1" height="3" fill="#000"/><text x="295.6" y="579" font-size="12.6" letter-spacing="0.3">07:35</text><rect x="366" y="563" width="1" height="3" fill="#000"/><text x="367.6" y="579" font-size="12.6" letter-spacing="0.3">07:43</text><rect x="438" y="563" width="1" height="3" fill="#000"/><text x="439.6" y="579" font-size="12.6" letter-spacing="0.3">07:51</text><rect x="510" y="563" width="1" height="3" fill="#000"/><text x="511.6" y="579" font-size="12.6" letter-spacing="0.3">07:59</text><rect x="582" y="563" width="1" height="3" fill="#000"/><text x="583.6" y="579" font-size="12.6" letter-spacing="0.3">08:07</text><rect x="654" y="563" width="1" height="3" fill="#000"/><text x="655.6" y="579" font-size="12.6" letter-spacing="0.3">08:15</text><rect x="726" y="563" width="1" height="3" fill="#000"/><text x="727.6" y="579" font-size="12.6" letter-spacing="0.3">08:23</text><rect x="798" y="563" width="1" height="3" fill="#000"/><text x="799.6" y="579" font-size="12.6" letter-spacing="0.3">08:31</text><rect x="870" y="563" width="1" height="3" fill="#000"/><text x="871.6" y="579" font-size="12.6" letter-spacing="0.3">08:39</text><rect x="942" y="563" width="1" height="3" fill="#000"/><text x="943.6" y="579" font-size="12.6" letter-spacing="0.3">08:47</text><rect x="1014" y="563" width="1" height="3" fill="#000"/><text x="1015.6" y="579" font-size="12.6" letter-spacing="0.3">08:55</text><rect x="1086" y="563" width="1" height="3" fill="#000"/><text x="1087.6" y="579" font-size="12.6" letter-spacing="0.3">09:03</text><rect x="1158" y="563" width="1" height="3" fill="#000"/><text x="1159.6" y="579" font-size="12.6" letter-spacing="0.3">09:11</text><rect x="1230" y="563" width="1" height="3" fill="#000"/><text x="1231.6" y="579" font-size="12.6" letter-spacing="0.3">09:19</text><rect x="1302" y="563" width="1" height="3" fill="#000"/><text x="1303.6" y="579" font-size="12.6" letter-spacing="0.3">09:27</text><rect x="1374" y="563" width="1" height="3" fill="#000"/><text x="1375.6" y="579" font-size="12.6" letter-spacing="0.3">09:35</text><rect x="1446" y="563" width="1" height="3" fill="#000"/><text x="1447.6" y="579" font-size="12.6" letter-spacing="0.3">09:43</text><rect x="1518" y="563" width="1" height="3" fill="#000"/><text x="1519.6" y="579" font-size="12.6" letter-spacing="0.3">09:51</text><rect x="1590" y="563" width="1" height="3" fill="#000"/><text x="1591.6" y="579" font-size="12.6" letter-spacing="0.3">09:59</text><rect x="1662" y="563" width="1" height="3" fill="#000"/><text x="1663.6" y="579" font-size="12.6" letter-spacing="0.3">10:07</text><rect x="1734" y="563" width="1" height="3" fill="#000"/><text x="1735.6" y="579" font-size="12.6" letter-spacing="0.3">10:15</text></g>
<polygon points="1740,447.5 1749,439 1798,439 1800,441 1800,455 1798,457 1749,457" fill="#f15a24"/>
<polyline points="1740,447.5 1749,439.5 1798,439.5" fill="none" stroke="#007e3a" stroke-width="1"/>
<text x="1748.6" y="451.6" font-family="Liberation Sans, sans-serif" font-size="12.2" fill="#fff">1.21462</text>
<path d="M1729,32.5 H1735.5 V127.5 H1729" fill="none" stroke="#000" stroke-width="1" shape-rendering="crispEdges"/>
<text transform="translate(1730,80.5) rotate(-90)" text-anchor="middle" font-family="Liberation Sans, sans-serif" font-size="13" fill="#000">10 pips</text>
<rect x="1776" y="32" width="24" height="24" rx="3.5" fill="#c8c8c8"/>
<path d="M1789,38.7 H1781.7 V51 H1794.3 V44" fill="none" stroke="#000" stroke-width="1.25"/>
<path d="M1786,46.5 L1795.8,37.3" fill="none" stroke="#000" stroke-width="1.15"/>
<path d="M1792.6,36.2 L1797.2,36.2 L1797.2,40.8 Z" fill="#000"/>
<path d="M1582.5,552.5 H1601.5 L1607.5,546.5 L1613.5,552.5 H1623.5 Q1625.5,552.5 1625.5,554.5 V565.5 Q1625.5,567.5 1623.5,567.5 H1582.5 Q1580.5,567.5 1580.5,565.5 V554.5 Q1580.5,552.5 1582.5,552.5 Z" fill="#fff" stroke="#000" stroke-width="1.2"/>
<g fill="#444"><rect x="1584" y="556" width="1" height="1"/><rect x="1584" y="558" width="1" height="1"/><rect x="1584" y="560" width="1" height="1"/><rect x="1584" y="562" width="1" height="1"/><rect x="1584" y="564" width="1" height="1"/><rect x="1586" y="556" width="1" height="1"/><rect x="1586" y="558" width="1" height="1"/><rect x="1586" y="560" width="1" height="1"/><rect x="1586" y="562" width="1" height="1"/><rect x="1586" y="564" width="1" height="1"/></g>
<text x="1594" y="566" font-family="Liberation Sans, sans-serif" font-size="12.4" fill="#000">00:29</text>
<rect x="5" y="618" width="1744" height="1" fill="#3dbdf0"/>
<rect x="5" y="690" width="1744" height="1" fill="#000"/>
<rect x="5" y="762" width="1744" height="1" fill="#3dbdf0"/>
<rect x="1750" y="618" width="3" height="1" fill="#888"/>
<text x="1753.8" y="624.6" font-family="Liberation Sans, sans-serif" font-size="12.4" fill="#000">70</text>
<rect x="1750" y="690" width="3" height="1" fill="#888"/>
<text x="1753.8" y="696.6" font-family="Liberation Sans, sans-serif" font-size="12.4" fill="#000">50</text>
<rect x="1750" y="762" width="3" height="1" fill="#888"/>
<text x="1753.8" y="768.6" font-family="Liberation Sans, sans-serif" font-size="12.4" fill="#000">30</text>
<polyline clip-path="url(#rsiclip)" points="-2.5,700.0 6.5,643.2 15.5,666.0 24.5,662.0 33.5,650.2 42.5,638.4 51.5,677.8 60.5,710.4 69.5,678.3 78.5,719.2 87.5,719.2 96.5,707.9 105.5,693.3 114.5,704.1 123.5,743.0 132.5,725.9 141.5,736.7 150.5,738.5 159.5,729.2 168.5,717.9 177.5,692.8 186.5,685.3 195.5,699.1 204.5,680.3 213.5,669.8 222.5,658.2 231.5,661.5 240.5,651.5 249.5,650.2 258.5,645.7 267.5,618.8 276.5,621.4 285.5,626.4 294.5,617.1 303.5,634.4 312.5,634.4 321.5,629.4 330.5,618.8 339.5,636.9 348.5,622.1 357.5,620.9 366.5,612.1 375.5,606.3 384.5,600.5 393.5,624.6 402.5,643.9 411.5,625.9 420.5,608.3 429.5,630.1 438.5,613.3 447.5,636.4 456.5,628.9 465.5,615.1 474.5,664.7 483.5,669.8 492.5,687.8 501.5,689.1 510.5,706.6 519.5,712.9 528.5,701.6 537.5,692.3 546.5,691.6 555.5,691.6 564.5,712.9 573.5,736.0 582.5,715.4 591.5,733.0 600.5,749.0 609.5,763.6 618.5,744.3 627.5,742.5 636.5,720.4 645.5,712.9 654.5,724.2 663.5,689.1 672.5,682.3 681.5,679.0 690.5,674.0 699.5,647.7 708.5,656.5 717.5,635.1 726.5,622.6 735.5,625.0 744.5,601.8 753.5,634.6 762.5,643.9 771.5,641.4 780.5,664.0 789.5,686.6 798.5,667.3 807.5,669.8 816.5,681.5 825.5,685.3 834.5,700.9 843.5,684.8 852.5,668.5 861.5,668.5 870.5,688.3 879.5,676.5 888.5,694.1 897.5,700.4 906.5,689.1 915.5,682.3 924.5,682.3 933.5,692.3 942.5,685.3 951.5,666.5 960.5,647.7 969.5,656.5 978.5,667.8 987.5,674.0 996.5,675.3 1005.5,675.3 1014.5,695.8 1023.5,690.3 1032.5,672.3 1041.5,676.5 1050.5,650.7 1059.5,669.8 1068.5,674.0 1077.5,682.3 1086.5,663.2 1095.5,655.7 1104.5,649.7 1113.5,643.2 1122.5,619.6 1131.5,638.9 1140.5,628.5 1149.5,623.5 1158.5,609.6 1167.5,600.5 1176.5,629.6 1185.5,620.6 1194.5,618.1 1203.5,612.6 1212.5,622.1 1221.5,610.6 1230.5,608.1 1239.5,642.2 1248.5,626.4 1257.5,615.1 1266.5,623.9 1275.5,667.3 1284.5,672.3 1293.5,673.3 1302.5,695.8 1311.5,689.6 1320.5,690.3 1329.5,701.1 1338.5,705.9 1347.5,694.8 1356.5,705.9 1365.5,707.4 1374.5,724.2 1383.5,745.0 1392.5,737.5 1401.5,750.0 1410.5,740.5 1419.5,768.6 1428.5,774.4 1437.5,758.5 1446.5,770.1 1455.5,756.0 1464.5,760.6 1473.5,748.5 1482.5,728.5 1491.5,733.5 1500.5,733.5 1509.5,746.0 1518.5,748.5 1527.5,744.3 1536.5,725.9 1545.5,730.5 1554.5,725.9 1563.5,734.2 1572.5,718.4 1581.5,723.4 1590.5,727.4 1599.5,717.4 1608.5,717.4 1617.5,671.5 1626.5,678.3 1635.5,665.2 1644.5,674.0 1653.5,653.2 1662.5,683.3 1671.5,679.0 1680.5,659.0 1689.5,691.6 1698.5,677.8 1707.5,668.3 1716.5,698.4 1725.5,705.4 1734.5,703.4 1743.5,684.0 1752.5,678.5" fill="none" stroke="#008000" stroke-width="1" shape-rendering="crispEdges"/>
<text x="10.3" y="602" font-family="Liberation Sans, sans-serif" font-size="14.3" fill="#555">Relative Strength Index (Close, 14)</text>
<text x="236.5" y="601.2" font-family="Liberation Sans, sans-serif" font-size="14" fill="#008000">50</text>
<circle cx="377.3" cy="605.8" r="20.4" fill="none" stroke="#2a2a2a" stroke-width="1.35"/>
<circle cx="609.6" cy="759.9" r="20.4" fill="none" stroke="#2a2a2a" stroke-width="1.35"/>
<circle cx="742.5" cy="608.8" r="20.4" fill="none" stroke="#2a2a2a" stroke-width="1.35"/>
<circle cx="1164.5" cy="604.5" r="20.4" fill="none" stroke="#2a2a2a" stroke-width="1.35"/>
<circle cx="1431.4" cy="771.2" r="20.4" fill="none" stroke="#2a2a2a" stroke-width="1.35"/>
<text x="790" y="733.9" font-family="Liberation Sans, sans-serif" font-size="17.2" letter-spacing="0.18" fill="#000">Above 50, indicating bullishness</text>
<rect x="1776" y="589" width="24" height="24" rx="3.5" fill="#c8c8c8"/>
<path d="M1782.5,595.5 L1792.5,605.5 M1792.5,595.5 L1782.5,605.5" stroke="#fff" stroke-width="1.6"/>
</svg>
</body></html>
